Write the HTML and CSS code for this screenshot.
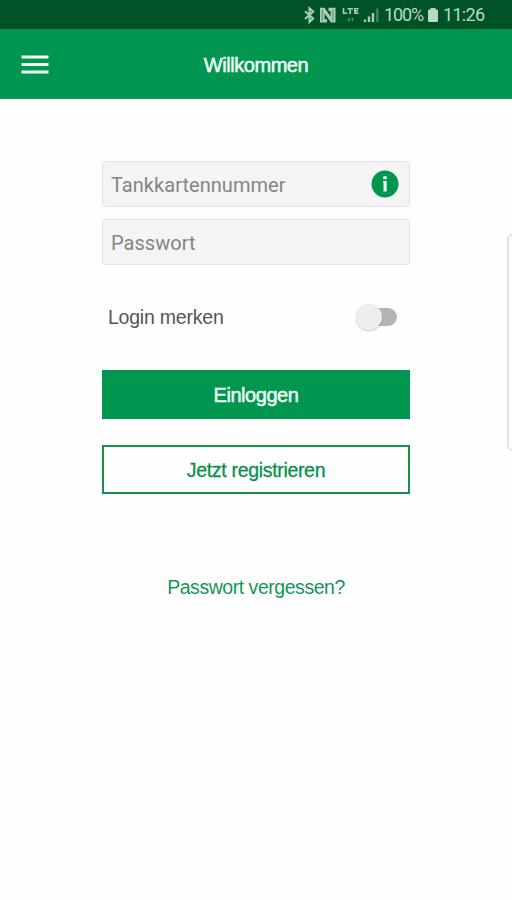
FILE: index.html
```html
<!DOCTYPE html>
<html lang="de">
<head>
<meta charset="utf-8">
<title>Willkommen</title>
<link rel="stylesheet" href="styles.css">
</head>
<body>
<div class="status">
  <svg class="status-icons" width="78" height="30" viewBox="0 0 78 30" fill="none" stroke="#a9cdb4">
    <path d="M2 11.2 L10.2 18.6 L6.5 22 V8.2 L10.2 11.6 L2 19" stroke-width="2"/>
    <path d="M17 7.8 H21.5 L27.6 16.5 V11 H25.5 V7.8 H32.5 V22.5 H28 L21.6 13.5 V19.2 H24 V22.5 H17 Z" fill="#a9cdb4" stroke="none"/>
    <path d="M19.3 9.5 V20.8 M30 9.5 V20.8" stroke="#3d7d56" stroke-width="0.8"/>
    <path d="M40.5 8 V13.2 H44.2 M44.4 8.7 H50 M47.2 8.5 V14 M55.6 8.7 H51.8 V13.3 H55.6 M51.8 11 H55" stroke-width="1.6"/>
    <path d="M46 18 V21 M49.5 18 V21" stroke="#5c9470" stroke-width="1.6"/>
    <path d="M62 19.5 V22 M66 16.5 V22 M70 13 V22" stroke-width="2.4"/>
    <path d="M74.3 8.5 V22" stroke="#4c8460" stroke-width="2.2"/>
  </svg>
  <span class="percent">100%</span>
  <svg class="battery" width="12" height="14" viewBox="0 0 12 14"><path d="M3.5 0h5v1.5h1.2q1.3 0 1.3 1.3V12.7q0 1.3-1.3 1.3H2.3Q1 14 1 12.7V2.8q0-1.3 1.3-1.3h1.2z" fill="#b9dac4"/></svg>
  <span class="time">11:26</span>
</div>
<header class="bar">
  <svg class="menu" width="28" height="20" viewBox="0 0 28 20"><path d="M0.5 2H27.5M0.5 9.5H27.5M0.5 17H27.5" stroke="#f2fbf5" stroke-width="3"/></svg>
  <h1 class="title">Willkommen</h1>
</header>
<main class="form">
  <div class="field"><span>Tankkartennummer</span>
    <svg width="28" height="28" viewBox="0 0 28 28"><circle cx="14" cy="14" r="13.5" fill="#009650"/><path d="M12 11h3.7v10.6h-3.2v-8.8h-.5zM12.3 6.2h3.4v3h-3.4z" fill="#e9f6ee"/></svg>
  </div>
  <div class="field"><span>Passwort</span></div>
  <div class="remember"><span>Login merken</span><div class="switch"><i class="knob"></i></div></div>
  <div class="button primary"><span>Einloggen</span></div>
  <div class="button outline"><span>Jetzt registrieren</span></div>
  <a class="forgot">Passwort vergessen?</a>
</main>
<div class="edge-handle"></div>
</body>
</html>
```
FILE: styles.css
```css
* { box-sizing: border-box; }
body {
  margin: 0;
  height: 900px;
  position: relative;
  overflow: hidden;
  background: #fefefe;
  font-family: "Liberation Sans", Arial, sans-serif;
}
svg { display: block; flex: none; }
.status {
  height: 29px;
  display: flex;
  align-items: center;
  padding-left: 303px;
  background: #005326;
  color: #b9dac4;
  font: 18px/30px Roboto, sans-serif;
}
.status-icons { margin-right: 3px; }
.percent { width: 39px; letter-spacing: -1.1px; margin-right: 4px; }
.battery { margin-right: 4px; }
.time { letter-spacing: -0.7px; }
.bar {
  height: 70px;
  display: flex;
  align-items: center;
  padding: 2px 21px 0;
  background: #009650;
  border-bottom: 1px solid #159654;
}
.title {
  flex: 1;
  margin: 0 28px 0 0;
  text-align: center;
  font-size: 20px;
  font-weight: 400;
  line-height: 24px;
  letter-spacing: -0.45px;
  color: #f2fbf5;
  -webkit-text-stroke: 0.5px;
}
.form {
  width: 308px;
  margin: 62px auto 0;
  display: flex;
  flex-direction: column;
}
.field {
  height: 46px;
  margin-bottom: 12px;
  padding: 2px 10px 0 8px;
  display: flex;
  align-items: center;
  justify-content: space-between;
  background: #f4f4f4;
  border: 1px solid #e4e4e4;
  border-radius: 3px;
  color: #858585;
  font: 20px/24px Roboto, sans-serif;
  letter-spacing: 0.04px;
}
.field svg { margin-top: -2px; }
.remember {
  height: 44px;
  margin: 18px 0 31px;
  padding: 0 13px 0 6px;
  display: flex;
  align-items: center;
  justify-content: space-between;
  font-size: 19.5px;
  letter-spacing: -0.22px;
  color: #555;
}
.switch {
  width: 40px;
  height: 18px;
  border-radius: 9px;
  background: linear-gradient(to right, transparent 12px, #b4b4b4 12px);
  display: flex;
  align-items: center;
}
.knob {
  width: 26px;
  height: 26px;
  flex: none;
  margin-left: -1px;
  border-radius: 50%;
  background: #eee;
  box-shadow: 0 1px 2px rgba(0, 0, 0, .22);
}
.button {
  height: 49px;
  display: flex;
  align-items: center;
  justify-content: center;
  font-size: 20px;
  line-height: 24px;
}
.primary {
  margin-bottom: 26px;
  background: #009650;
  color: #eff9f3;
  letter-spacing: -0.45px;
  -webkit-text-stroke: 0.5px;
}
.outline {
  border: 2px solid #169149;
  color: #07914c;
  font-size: 19.5px;
  letter-spacing: -0.32px;
  -webkit-text-stroke: 0.3px;
}
.forgot {
  margin-top: 81px;
  align-self: center;
  font-size: 19.5px;
  line-height: 24px;
  letter-spacing: -0.46px;
  color: #159656;
}
.edge-handle {
  position: absolute;
  left: 507px;
  top: 234px;
  width: 12px;
  height: 217px;
  border: 2px solid #e3e3e3;
  border-radius: 5px;
}
```
